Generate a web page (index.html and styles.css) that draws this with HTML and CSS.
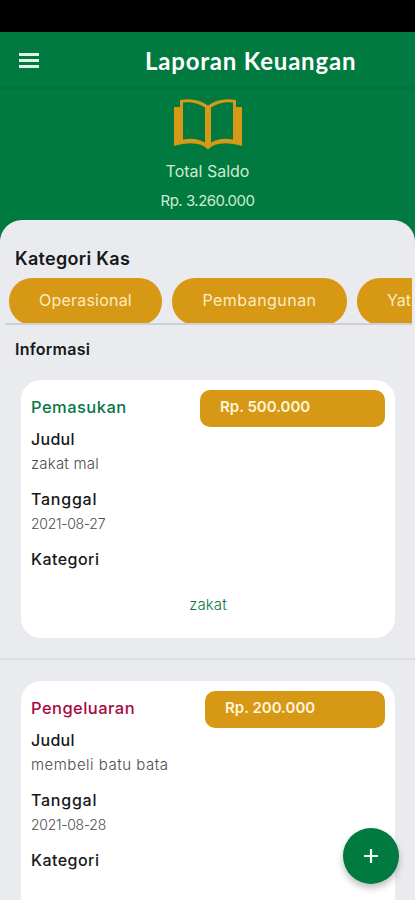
FILE: index.html
```html
<!DOCTYPE html>
<html lang="id">
<head>
<meta charset="utf-8">
<meta name="viewport" content="width=device-width, initial-scale=1">
<title>Laporan Keuangan</title>
<link rel="stylesheet" href="styles.css">
</head>
<body>
<div class="screen">
  <div class="statusbar"></div>
  <header class="appbar">
    <svg class="menu" viewBox="0 0 20 15" aria-hidden="true"><path d="M0 1.5h20M0 7.5h20M0 13.5h20"/></svg>
    <h1><span class="t-title">Laporan Keuangan</span></h1>
  </header>
  <section class="summary">
    <svg class="book" viewBox="0 0 68 51" aria-hidden="true">
      <path fill-rule="evenodd" d="M0 8H6V1Q22-2 34 6.500Q46-2 62 1V8H68V47Q44 40 34 50.500Q24 40 0 47ZM9 3.500V40.500Q22 38 31 43.500V8.500Q21 2 9 3.500ZM59 3.500V40.500Q46 38 37 43.500V8.500Q47 2 59 3.500Z"/>
    </svg>
    <p class="t-total">Total Saldo</p>
    <p class="t-amount">Rp. 3.260.000</p>
  </section>
  <main class="panel">
    <h2 class="t-cat">Kategori Kas</h2>
    <nav class="chips">
      <span class="chip chip-a"><span class="t-op">Operasional</span></span>
      <span class="chip chip-b"><span class="t-pem">Pembangunan</span></span>
      <span class="chip chip-c"><span class="t-yat">Yat</span></span>
    </nav>
    <h3 class="t-info">Informasi</h3>
    <article class="card">
      <div class="head"><span class="kind income">Pemasukan</span><span class="price price-a">Rp. 500.000</span></div>
      <h4 class="t-judul">Judul</h4><p class="t-mal">zakat mal</p>
      <h4 class="t-tanggal">Tanggal</h4><p class="t-date">2021-08-27</p>
      <h4 class="t-kategori">Kategori</h4>
      <p class="tag">zakat</p>
    </article>
    <div class="divider"></div>
    <article class="card">
      <div class="head"><span class="kind expense">Pengeluaran</span><span class="price price-b">Rp. 200.000</span></div>
      <h4 class="t-judul">Judul</h4><p class="t-bata">membeli batu bata</p>
      <h4 class="t-tanggal">Tanggal</h4><p class="t-date">2021-08-28</p>
      <h4 class="t-kategori">Kategori</h4>
    </article>
  </main>
  <button class="fab" aria-label="Tambah"><svg viewBox="0 0 14 14"><path d="M7 0v14M0 7h14"/></svg></button>
</div>
</body>
</html>
```
FILE: styles.css
```css
* { box-sizing: border-box; margin: 0; padding: 0; }
body { font-family: Inter, "Liberation Sans", sans-serif; font-size: 15px; color: #17181a; }
.screen { position: relative; height: 900px; overflow: hidden; background: #007a3e; display: flex; flex-direction: column; }
.statusbar { height: 32px; background: #000; flex: none; }
.appbar { height: 57px; flex: none; display: flex; align-items: center; padding: 2px 0 0 19px; border-bottom: 2px solid #00733a; }
.menu { width: 20px; height: 15px; flex: none; stroke: #e0f3e6; stroke-width: 2.8; }
.appbar h1 { margin-left: 106px; font: 700 24px/30px Lato, sans-serif; letter-spacing: .8px; color: #fff; white-space: nowrap; }
.summary { height: 131px; flex: none; padding-top: 10px; text-align: center; color: #cdebd3; }
.book { display: block; width: 68px; height: 51px; margin: 0 auto; fill: #d79816; }
.summary p { line-height: 30px; white-space: nowrap; }
.summary .t-total { margin-top: 6px; font-size: 16px; letter-spacing: 0; }
.t-amount { letter-spacing: -.5px; }
.panel { flex: 1; min-height: 0; overflow: hidden; background: #e9ebee; border-radius: 22px 22px 0 0; padding-top: 25px; }
.panel h2 { margin-left: 15px; font-size: 18px; line-height: 28px; font-weight: 600; letter-spacing: .3px; }
.chips { display: flex; gap: 10px; margin: 5px 3px 0 5px; padding-left: 4px; height: 47px; overflow: hidden; border-bottom: 2px solid #ced0d6; }
.chip { flex: none; height: 47px; line-height: 44px; border-radius: 23px; background: #d79816; color: #fbecc0; text-align: center; white-space: nowrap; font-size: 16px; }
.chip-a { width: 153px; letter-spacing: .2px; }
.chip-b { width: 175px; letter-spacing: .45px; }
.chip-c { width: 110px; padding-left: 30px; text-align: left; }
.panel h3 { margin: 11px 0 0 15px; font-size: 16px; line-height: 26px; font-weight: 600; letter-spacing: .25px; }
.card { margin: 18px 20px 0 21px; height: 258px; padding: 10px; border-radius: 20px; background: #fff; }
.head { display: flex; justify-content: space-between; height: 37px; }
.kind { line-height: 34px; font-size: 16.5px; font-weight: 500; letter-spacing: .45px; }
.income { color: #087745; }
.expense { color: #a60a40; }
.price { height: 37px; border-radius: 10px; background: #d79816; color: #fff5d8; line-height: 34px; padding-left: 20px; font-weight: 600; white-space: nowrap; }
.price-a { width: 185px; }
.price-b { width: 180px; }
.card h4 { font-size: 16px; line-height: 24px; font-weight: 500; letter-spacing: .3px; }
.card .t-tanggal { letter-spacing: .75px; }
.card .t-kategori { letter-spacing: .45px; }
.card p { font-size: 14px; line-height: 26px; font-weight: 300; color: #4b4d50; }
.card .t-mal { font-size: 15px; letter-spacing: .2px; }
.card .t-bata { font-size: 15px; letter-spacing: .5px; }
.card .t-date { letter-spacing: -.3px; }
.card p + h4 { margin-top: 10px; }
.card .tag { margin-top: 21px; text-align: center; color: #087745; font-size: 15px; letter-spacing: .1px; }
.divider { height: 2px; margin-top: 20px; background: #dcdee2; }
.divider + .card { margin-top: 21px; }
.fab { position: absolute; left: 343px; top: 828px; width: 56px; height: 56px; border: 0; border-radius: 50%; background: #007a3e; box-shadow: 0 4px 7px rgba(0,0,0,.26); display: flex; align-items: center; justify-content: center; }
.fab svg { width: 14px; height: 14px; stroke: #f0fff4; stroke-width: 2.2; }
```
